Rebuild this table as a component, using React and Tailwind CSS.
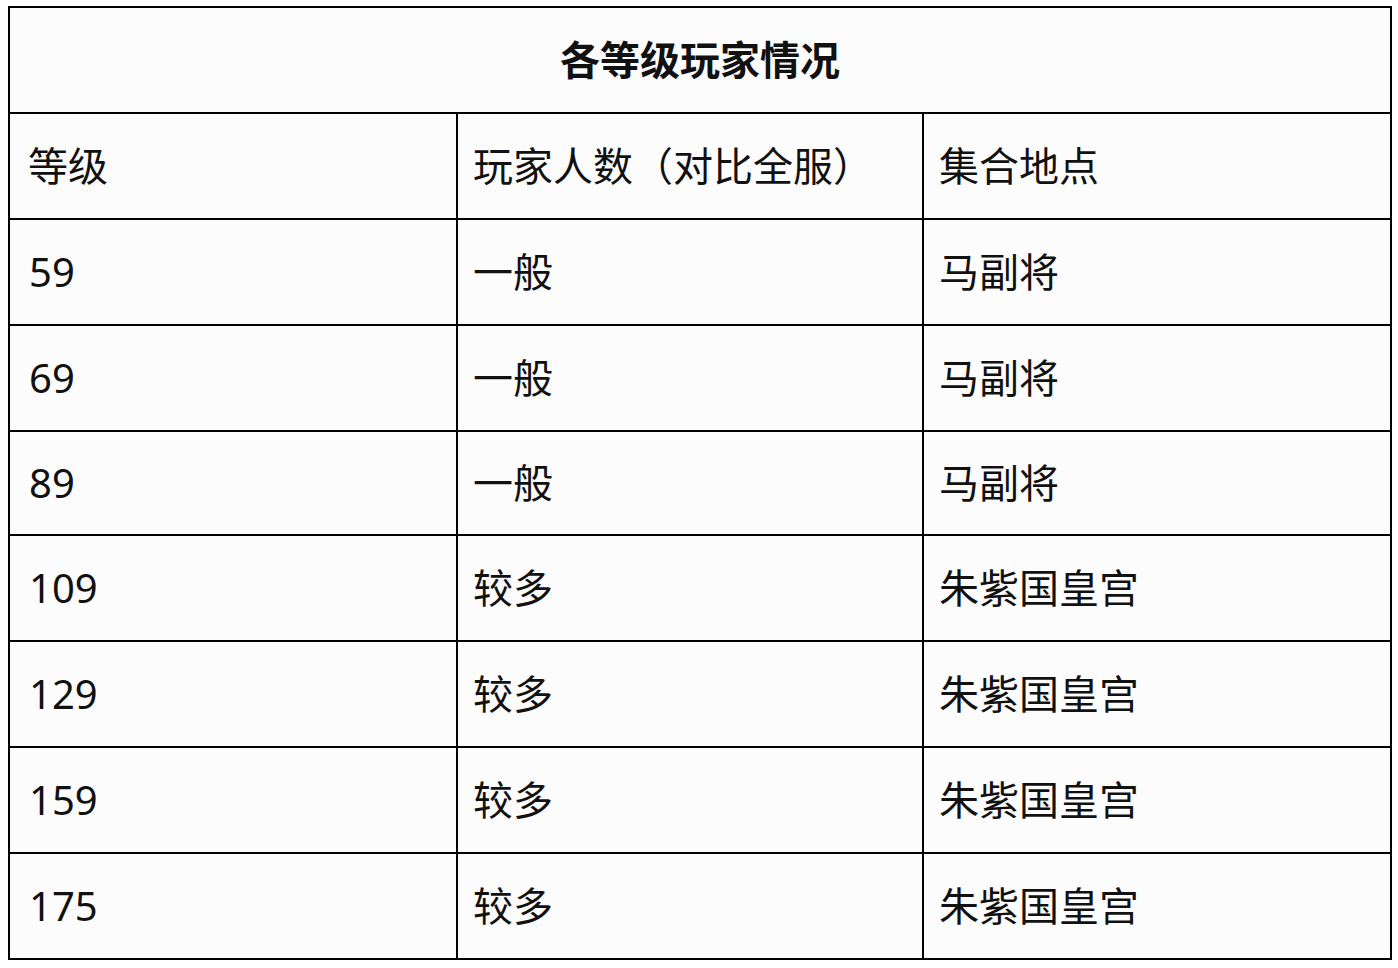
import React from 'react';

const rows = [
  ['59', '一般', '马副将', 'h-[106px]'],
  ['69', '一般', '马副将', 'h-[106px]'],
  ['89', '一般', '马副将', 'h-[104px]'],
  ['109', '较多', '朱紫国皇宫', 'h-[106px]'],
  ['129', '较多', '朱紫国皇宫', 'h-[106px]'],
  ['159', '较多', '朱紫国皇宫', 'h-[106px]'],
  ['175', '较多', '朱紫国皇宫', 'h-[106px]'],
];

const font = { fontFamily: '"Noto Sans", "Noto Sans CJK SC", sans-serif' };

export default function App() {
  return (
    <div className="min-h-[968px] bg-white pl-[8px] pt-[6px]" style={font}>
      <table className="w-[1382px] table-fixed border-collapse bg-[#fdfcfd] text-[#111]">
        <colgroup>
          <col className="w-[448px]" />
          <col className="w-[466px]" />
          <col className="w-[468px]" />
        </colgroup>
        <thead>
          <tr className="h-[106px]">
            <th colSpan={3} className="border-2 border-black text-center text-[40px] font-bold">
              各等级玩家情况
            </th>
          </tr>
        </thead>
        <tbody>
          <tr className="h-[106px]">
            <td className="border-2 border-black pl-[18px] text-[40px]">等级</td>
            <td className="border-2 border-black pl-[15px] text-[40px]">玩家人数（对比全服）</td>
            <td className="border-2 border-black pl-[15px] text-[40px]">集合地点</td>
          </tr>
          {rows.map((r, i) => (
            <tr key={i} className={r[3]}>
              <td className="border-2 border-black pl-[19px] text-[40px]">{r[0]}</td>
              <td className="border-2 border-black pl-[15px] text-[40px]">{r[1]}</td>
              <td className="border-2 border-black pl-[15px] text-[40px]">{r[2]}</td>
            </tr>
          ))}
        </tbody>
      </table>
    </div>
  );
}
